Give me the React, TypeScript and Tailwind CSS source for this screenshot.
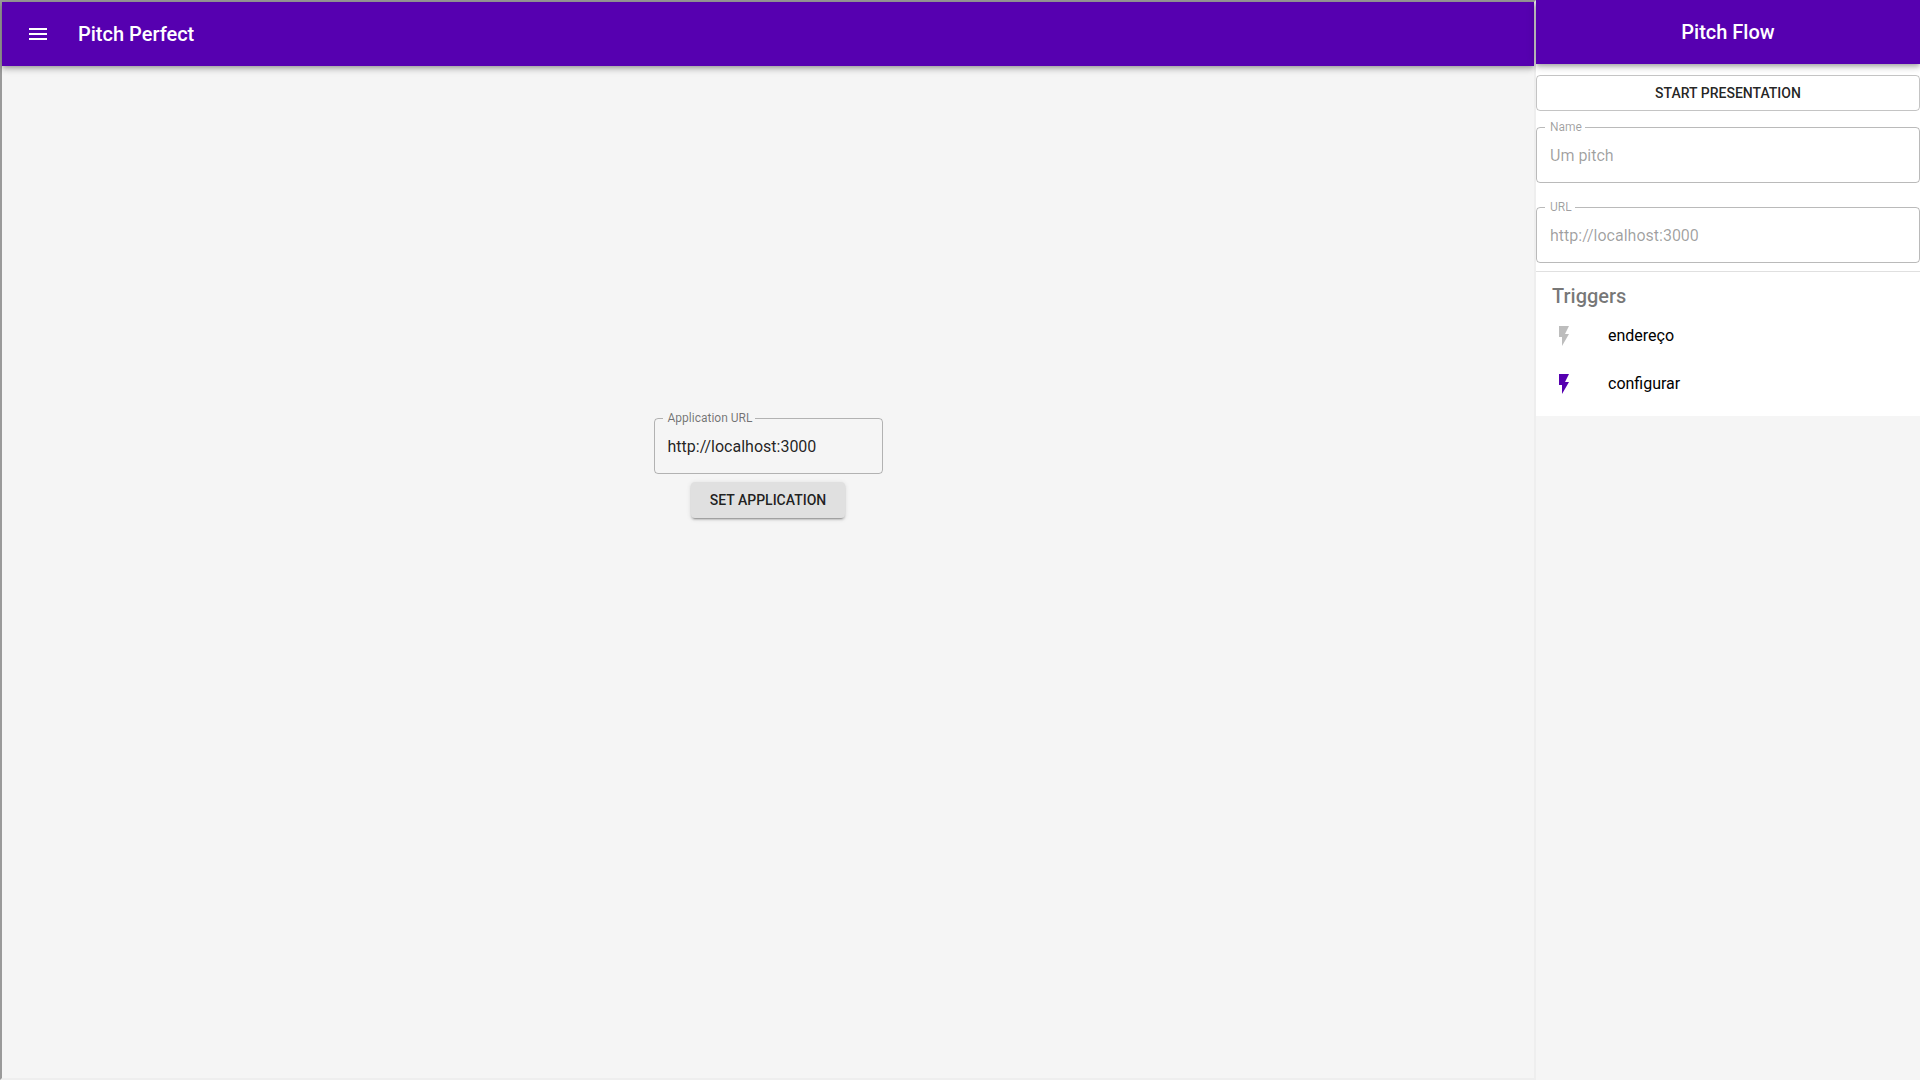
import { MdFlashOn, MdMenu } from 'react-icons/md'

const triggers = [
    { name: 'endereço', active: false },
    { name: 'configurar', active: true },
]

const barShadow = 'shadow-[0_2px_4px_-1px_rgba(0,0,0,0.2),0_4px_5px_0_rgba(0,0,0,0.14),0_1px_10px_0_rgba(0,0,0,0.12)]'

type FieldProps = {
    id: string
    label: string
    value: string
    disabled?: boolean
}

function Field({ id, label, value, disabled = false }: FieldProps) {
    return (
        <fieldset className="min-w-0 rounded border border-black/27">
            <legend className={`ml-2 pl-[5px] pr-[3px] text-xs leading-[15px] ${disabled ? 'text-black/38' : 'text-black/54'}`}>
                <label htmlFor={id} className="block">{label}</label>
            </legend>
            <input
                id={id}
                type="text"
                defaultValue={value}
                disabled={disabled}
                className={`mb-[7px] block h-10 w-full bg-transparent px-[13px] text-base outline-none ${disabled ? 'text-black/38' : 'text-black/87'}`}
            />
        </fieldset>
    )
}

function Application() {
    return (
        <div className="flex w-4/5 flex-col border-2 border-t-[#9a9a9a] border-r-[#eeeeee] border-b-[#eeeeee] border-l-[#9a9a9a]">
            <header className={`flex h-16 items-center gap-7 bg-[#5600b0] px-6 text-white ${barShadow}`}>
                <button type="button" aria-label="Menu">
                    <MdMenu className="size-6" />
                </button>
                <h1 className="text-xl font-medium">Pitch Perfect</h1>
            </header>
            <main className="flex flex-1 flex-col items-center justify-center gap-2 pb-[215px]">
                <div className="w-[229px]">
                    <Field id="application-url" label="Application URL" value="http://localhost:3000" />
                </div>
                <button
                    type="button"
                    className="h-9 rounded bg-[#e0e0e0] px-[19px] text-sm font-medium text-black/87 uppercase shadow-[0_3px_1px_-2px_rgba(0,0,0,0.2),0_2px_2px_0_rgba(0,0,0,0.14),0_1px_5px_0_rgba(0,0,0,0.12)]"
                >
                    Set application
                </button>
            </main>
        </div>
    )
}

function Flow() {
    return (
        <aside className="w-1/5">
            <header className={`relative flex h-16 items-center justify-center bg-[#5600b0] text-white ${barShadow}`}>
                <h2 className="text-xl font-medium">Pitch Flow</h2>
            </header>
            <div className="bg-white pt-[11px] pb-2">
                <button type="button" className="h-9 w-full rounded border border-black/23 text-sm font-medium text-black/87 uppercase">
                    Start presentation
                </button>
                <div className="mt-[9px] mb-2 flex flex-col gap-[17px]">
                    <Field id="name" label="Name" value="Um pitch" disabled />
                    <Field id="url" label="URL" value="http://localhost:3000" disabled />
                </div>
                <hr className="border-black/12" />
                <h3 className="px-4 pt-2 text-xl leading-8 font-medium text-black/54">Triggers</h3>
                <ul>
                    {triggers.map(({ name, active }) => (
                        <li key={name}>
                            <button type="button" className="flex h-12 w-full items-center gap-8 px-4 text-left text-base">
                                <MdFlashOn className={`size-6 ${active ? 'text-[#5600b0]' : 'text-black/26'}`} />
                                {name}
                            </button>
                        </li>
                    ))}
                </ul>
            </div>
        </aside>
    )
}

export default function App() {
    return (
        <div className="flex min-h-screen bg-[#f5f5f5] font-[Roboto,sans-serif] text-black">
            <Application />
            <Flow />
        </div>
    )
}
